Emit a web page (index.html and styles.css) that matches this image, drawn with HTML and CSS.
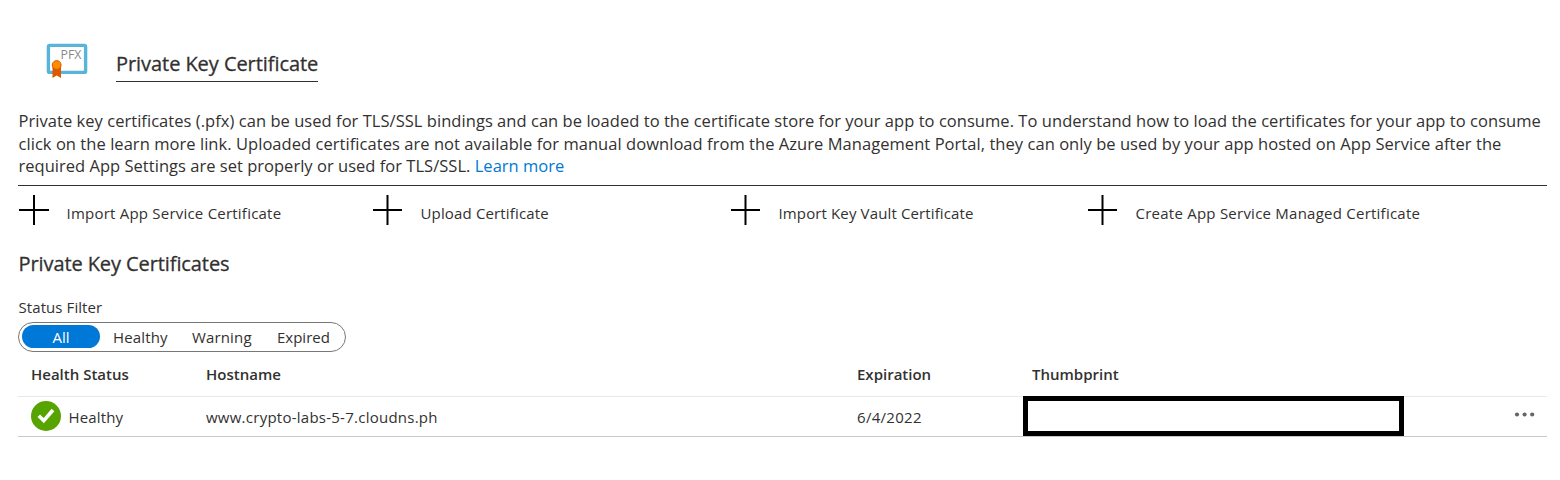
FILE: index.html
```html
<!DOCTYPE html>
<html lang="en">
<head>
<meta charset="utf-8">
<title>Private Key Certificate</title>
<link rel="stylesheet" href="styles.css">
</head>
<body>
<main class="page">
  <header class="heading">
    <svg class="pfx-icon" width="42" height="36" viewBox="0 0 42 36">
      <rect x="2.4" y="2.4" width="37.2" height="27" rx="1.5" fill="#fff" stroke="#59b4d9" stroke-width="3.4"/>
      <path d="M6.500 21v14l4.200-2.500 4.300 2.500V21z" fill="#dd5900"/>
      <circle cx="10.700" cy="22" r="4.400" fill="#ff8c00" stroke="#dd5900" stroke-width="1"/>
      <text class="pfx-text" x="14.500" y="16" textLength="21" lengthAdjust="spacingAndGlyphs">PFX</text>
    </svg>
    <h1 class="title">Private Key Certificate</h1>
  </header>
  <p class="intro">
    <span class="line line-1">Private key certificates (.pfx) can be used for TLS/SSL bindings and can be loaded to the certificate store for your app to consume. To understand how to load the certificates for your app to consume</span>
    <span class="line line-2">click on the learn more link. Uploaded certificates are not available for manual download from the Azure Management Portal, they can only be used by your app hosted on App Service after the</span>
    <span class="line line-3">required App Settings are set properly or used for TLS/SSL. <a class="link">Learn more</a></span>
  </p>
  <nav class="actions">
    <a class="action"><svg class="plus" width="30" height="30"><path d="M0 15H30M15 0V30" stroke="#000" stroke-width="2"/></svg><span class="action-import">Import App Service Certificate</span></a>
    <a class="action"><svg class="plus" width="30" height="30"><path d="M0 15H29M14.500 0V30" stroke="#000" stroke-width="2"/></svg><span class="action-upload">Upload Certificate</span></a>
    <a class="action"><svg class="plus" width="30" height="30"><path d="M0 15H29M14.500 0V30" stroke="#000" stroke-width="2"/></svg><span class="action-vault">Import Key Vault Certificate</span></a>
    <a class="action"><svg class="plus" width="30" height="30"><path d="M0 15H29M14.500 0V30" stroke="#000" stroke-width="2"/></svg><span class="action-create">Create App Service Managed Certificate</span></a>
  </nav>
  <h2 class="subtitle">Private Key Certificates</h2>
  <div class="filter-label">Status Filter</div>
  <div class="filter">
    <span class="option selected">All</span>
    <span class="option healthy">Healthy</span>
    <span class="option warning">Warning</span>
    <span class="option expired">Expired</span>
  </div>
  <section class="table">
    <div class="row head">
      <span>Health Status</span><span>Hostname</span><span>Expiration</span><span>Thumbprint</span>
    </div>
    <div class="row data">
      <span class="status"><svg class="check" width="30" height="30"><circle cx="15" cy="15" r="15" fill="#57a300"/><path d="M7.800 14.700l5 5L22 9" fill="none" stroke="#fff" stroke-width="3.600"/></svg><span class="status-text">Healthy</span></span>
      <span class="host">www.crypto-labs-5-7.cloudns.ph</span>
      <span class="date">6/4/2022</span>
      <span class="redacted"></span>
      <svg class="more" width="22" height="6"><circle cx="3" cy="2.500" r="2.100"/><circle cx="10.600" cy="2.500" r="2.100"/><circle cx="18.200" cy="2.500" r="2.100"/></svg>
    </div>
  </section>
</main>
</body>
</html>
```
FILE: styles.css
```css
body { margin: 0; background: #fff; color: #323130; font-family: "Open Sans", "Noto Sans", sans-serif; }
.page { box-sizing: border-box; width: 1560px; height: 480px; padding: 43px 13px 0 18px; overflow: hidden; white-space: nowrap; font-size: 15px; }
.heading { display: flex; height: 67px; padding-left: 28px; gap: 28px; }
.pfx-icon { flex: none; }
.pfx-text { font-size: 12px; fill: #8a8a8a; }
.title { box-sizing: border-box; width: 202px; height: 39px; margin: 0; padding-top: 7px; border-bottom: 1px solid #323130; font-size: 20px; line-height: 28px; font-weight: 400; letter-spacing: -0.06px; -webkit-text-stroke: 0.3px #323130; }
.intro { height: 75px; margin: 0; border-bottom: 1px solid #323130; font-size: 16.5px; line-height: 22.5px; padding-left: 0.5px; }
.line { display: block; width: max-content; }
.line-1 { letter-spacing: 0.044px; }
.line-2 { letter-spacing: 0.05px; }
.line-3 { letter-spacing: 0.025px; }
.link { color: #0078d4; }
.actions { display: grid; grid-template-columns: 354px 358px 357px 1fr; height: 54px; padding: 9px 0 0 1px; box-sizing: border-box; letter-spacing: 0.15px; }
.action { display: flex; gap: 17.5px; line-height: 37px; }
.action-import { letter-spacing: 0.22px; }
.action-vault { letter-spacing: 0.13px; }
.action-create { letter-spacing: 0.24px; }
.plus { flex: none; }
.subtitle { height: 48px; margin: 0; padding: 10px 0 0 0.5px; box-sizing: border-box; font-size: 20px; line-height: 28px; font-weight: 400; letter-spacing: -0.09px; -webkit-text-stroke: 0.3px #323130; }
.filter-label { width: max-content; height: 34px; padding-top: 8px; box-sizing: border-box; line-height: 22px; letter-spacing: 0.08px; padding-left: 0.5px; }
.filter { display: flex; align-items: center; width: 328px; height: 30px; box-sizing: border-box; border: 1px solid #777; border-radius: 15px; padding: 0 3px; line-height: 23px; }
.option.selected { width: 78px; height: 23px; margin-top: -1px; border-radius: 12px; background: #0078d7; color: #fff; text-align: center; line-height: 24px; }
.healthy { margin-left: 13px; width: 79px; letter-spacing: 0.15px; }
.warning { width: 85px; letter-spacing: 0.15px; }
.row { display: grid; grid-template-columns: 175px 651px 175px 1fr; padding-left: 13px; box-sizing: border-box; }
.head { height: 45px; border-bottom: 1px solid #e8e8e8; line-height: 45px; font-weight: 600; }
.data { grid-template-columns: 175px 651px 166px 491px 1fr; height: 40px; border-bottom: 1px solid #c8c8c8; line-height: 41px; }
.status { display: flex; align-items: flex-start; gap: 7.5px; }
.status-text { letter-spacing: 0.15px; }
.check { margin-top: 4px; }
.host { letter-spacing: 0.25px; }
.date { letter-spacing: 0.3px; }
.redacted { width: 381px; height: 40px; margin-top: -1px; box-sizing: border-box; border: 5px solid #000; background: #fff; }
.more { margin-top: 15px; fill: #666; }
```
